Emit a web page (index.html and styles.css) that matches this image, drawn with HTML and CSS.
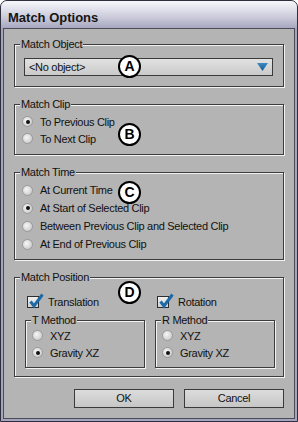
FILE: index.html
```html
<!DOCTYPE html>
<html>
<head>
<meta charset="utf-8">
<link rel="stylesheet" href="styles.css">
</head>
<body>
<div class="window">
  <div class="titlebar">Match Options</div>
  <div class="panel">
    <fieldset class="group">
      <legend>Match Object</legend>
      <div class="content c-object">
        <div class="dropdown">
          <span>&lt;No object&gt;</span>
          <svg class="caret" width="11" height="8" viewBox="0 0 11 8"><defs><linearGradient id="cg" x1="0" y1="0" x2="0" y2="1"><stop offset="0" stop-color="#3d8cc4"/><stop offset="1" stop-color="#16598f"/></linearGradient></defs><path d="M0 0 H11 L5.5 8 Z" fill="url(#cg)"/></svg>
        </div>
      </div>
    </fieldset>

    <fieldset class="group">
      <legend>Match Clip</legend>
      <div class="content c-clip">
        <div class="opt"><span class="radio on"></span>To Previous Clip</div>
        <div class="opt"><span class="radio"></span>To Next Clip</div>
      </div>
    </fieldset>

    <fieldset class="group">
      <legend>Match Time</legend>
      <div class="content c-time">
        <div class="opt"><span class="radio"></span>At Current Time</div>
        <div class="opt"><span class="radio on"></span>At Start of Selected Clip</div>
        <div class="opt"><span class="radio"></span>Between Previous Clip and Selected Clip</div>
        <div class="opt"><span class="radio"></span>At End of Previous Clip</div>
      </div>
    </fieldset>

    <fieldset class="group">
      <legend>Match Position</legend>
      <div class="content c-pos">
        <div class="col">
          <div class="check-row"><span class="checkbox"><svg class="tick" width="16" height="16" viewBox="0 0 16 16"><path d="M2.5 8.5 L6 13 L14.5 1.5" fill="none" stroke="#1d6aa8" stroke-width="3" stroke-linejoin="miter"/></svg></span>Translation</div>
          <fieldset class="group sub">
            <legend>T Method</legend>
            <div class="content c-sub">
              <div class="opt"><span class="radio"></span>XYZ</div>
              <div class="opt"><span class="radio on"></span>Gravity XZ</div>
            </div>
          </fieldset>
        </div>
        <div class="col">
          <div class="check-row"><span class="checkbox"><svg class="tick" width="16" height="16" viewBox="0 0 16 16"><path d="M2.5 8.5 L6 13 L14.5 1.5" fill="none" stroke="#1d6aa8" stroke-width="3" stroke-linejoin="miter"/></svg></span>Rotation</div>
          <fieldset class="group sub">
            <legend>R Method</legend>
            <div class="content c-sub">
              <div class="opt"><span class="radio"></span>XYZ</div>
              <div class="opt"><span class="radio on"></span>Gravity XZ</div>
            </div>
          </fieldset>
        </div>
      </div>
    </fieldset>

    <div class="buttons">
      <button class="btn">OK</button>
      <button class="btn">Cancel</button>
    </div>
  </div>

  <span class="callout co-a">A</span>
  <span class="callout co-b">B</span>
  <span class="callout co-c">C</span>
  <span class="callout co-d">D</span>
</div>
</body>
</html>
```

FILE: styles.css
```css
html, body {
  margin: 0;
  padding: 0;
  background: #ffffff;
}

.window {
  position: relative;
  box-sizing: border-box;
  width: 298px;
  height: 422px;
  border: 1px solid #2e2e3c;
  border-radius: 7px 7px 0 0;
  background: #a4a4be;
  display: flex;
  flex-direction: column;
  overflow: hidden;
  font-family: "Liberation Sans", Arial, sans-serif;
  font-size: 11px;
  letter-spacing: -0.3px;
  color: #111;
}

.titlebar {
  box-sizing: border-box;
  height: 27px;
  padding: 8px 0 0 7px;
  line-height: 17px;
  font-size: 13px;
  font-weight: bold;
  letter-spacing: 0;
  color: #141414;
  background: linear-gradient(#f7f7fb 0%, #e2e2ec 30%, #c2c2d4 70%, #a6a6c0 100%);
}

.panel {
  flex: 1;
  margin: 0 2px 2px;
  border: 1px solid #4c4c58;
  background: #b4b4b4;
  padding: 9px 10px 10px;
  display: flex;
  flex-direction: column;
  gap: 11px;
}

.group {
  margin: 0;
  padding: 0;
  min-width: 0;
  border: 1px solid #3c3c3c;
  box-shadow: inset 1px 1px 0 #f2f2f2, 1px 1px 0 #f2f2f2;
}

.group legend {
  margin-left: 5px;
  padding: 0 1px;
  line-height: 13px;
  height: 13px;
  background: #b4b4b4;
  color: #111;
}

.content {
  box-sizing: border-box;
}

.c-object {
  padding: 7px 10px 10px 9px;
}

.dropdown {
  box-sizing: border-box;
  height: 18px;
  border: 1px solid #3a3a3a;
  background: linear-gradient(#e2e2e2, #cacaca);
  display: flex;
  align-items: center;
  justify-content: space-between;
  padding: 0 4px 0 4px;
  line-height: 16px;
}

.caret {
  display: block;
}

.c-clip {
  padding: 2px 0 7px 7px;
}

.c-clip .opt {
  height: 17px;
}

.c-time {
  padding: 2px 0 6px 7px;
}

.c-time .opt {
  height: 18px;
}

.opt {
  display: flex;
  align-items: center;
  white-space: nowrap;
}

.radio {
  position: relative;
  flex: none;
  box-sizing: border-box;
  width: 11px;
  height: 11px;
  margin-right: 7px;
  border-radius: 50%;
  border: 1px solid #9a9a9a;
  background: radial-gradient(circle at 40% 38%, #f6f6f6 0%, #dedede 45%, #bdbdbd 100%);
}

.radio.on::after {
  content: "";
  position: absolute;
  left: 2.5px;
  top: 2.5px;
  width: 4px;
  height: 4px;
  border-radius: 50%;
  background: #111;
}

.c-pos {
  padding: 9px 8px 8px 10px;
  display: grid;
  grid-template-columns: 120px 120px;
  column-gap: 10px;
}

.col {
  display: flex;
  flex-direction: column;
  gap: 4px;
}

.check-row {
  height: 17px;
  display: flex;
  align-items: center;
  padding-left: 2px;
}

.checkbox {
  position: relative;
  flex: none;
  box-sizing: border-box;
  width: 12px;
  height: 12px;
  margin-right: 9px;
  border: 1px solid #2e2e2e;
  background: linear-gradient(#f0f0f0, #d2d2d2);
}

.tick {
  position: absolute;
  left: 0;
  top: -4px;
  overflow: visible;
}

.c-sub {
  padding: 0 0 6px 6px;
}

.c-sub .opt {
  height: 17px;
}

.buttons {
  margin-top: 1px;
  display: flex;
  justify-content: flex-end;
  gap: 10px;
}

.btn {
  box-sizing: border-box;
  width: 100px;
  height: 19px;
  margin: 0;
  padding: 0;
  border: 1px solid #3a3a3a;
  border-radius: 0;
  background: linear-gradient(#dcdcdc, #c6c6c6);
  font-family: "Liberation Sans", Arial, sans-serif;
  font-size: 11px;
  letter-spacing: -0.3px;
  color: #111;
  line-height: 17px;
}

.callout {
  position: absolute;
  box-sizing: border-box;
  width: 23px;
  height: 23px;
  border: 2px solid #000;
  border-radius: 50%;
  background: #fff;
  color: #000;
  font-family: "Liberation Sans", Arial, sans-serif;
  font-size: 14px;
  font-weight: bold;
  letter-spacing: 0;
  line-height: 19px;
  text-align: center;
}

.co-a { left: 117px; top: 54px; }
.co-b { left: 117px; top: 122px; }
.co-c { left: 117px; top: 180px; }
.co-d { left: 117px; top: 280px; }
```
